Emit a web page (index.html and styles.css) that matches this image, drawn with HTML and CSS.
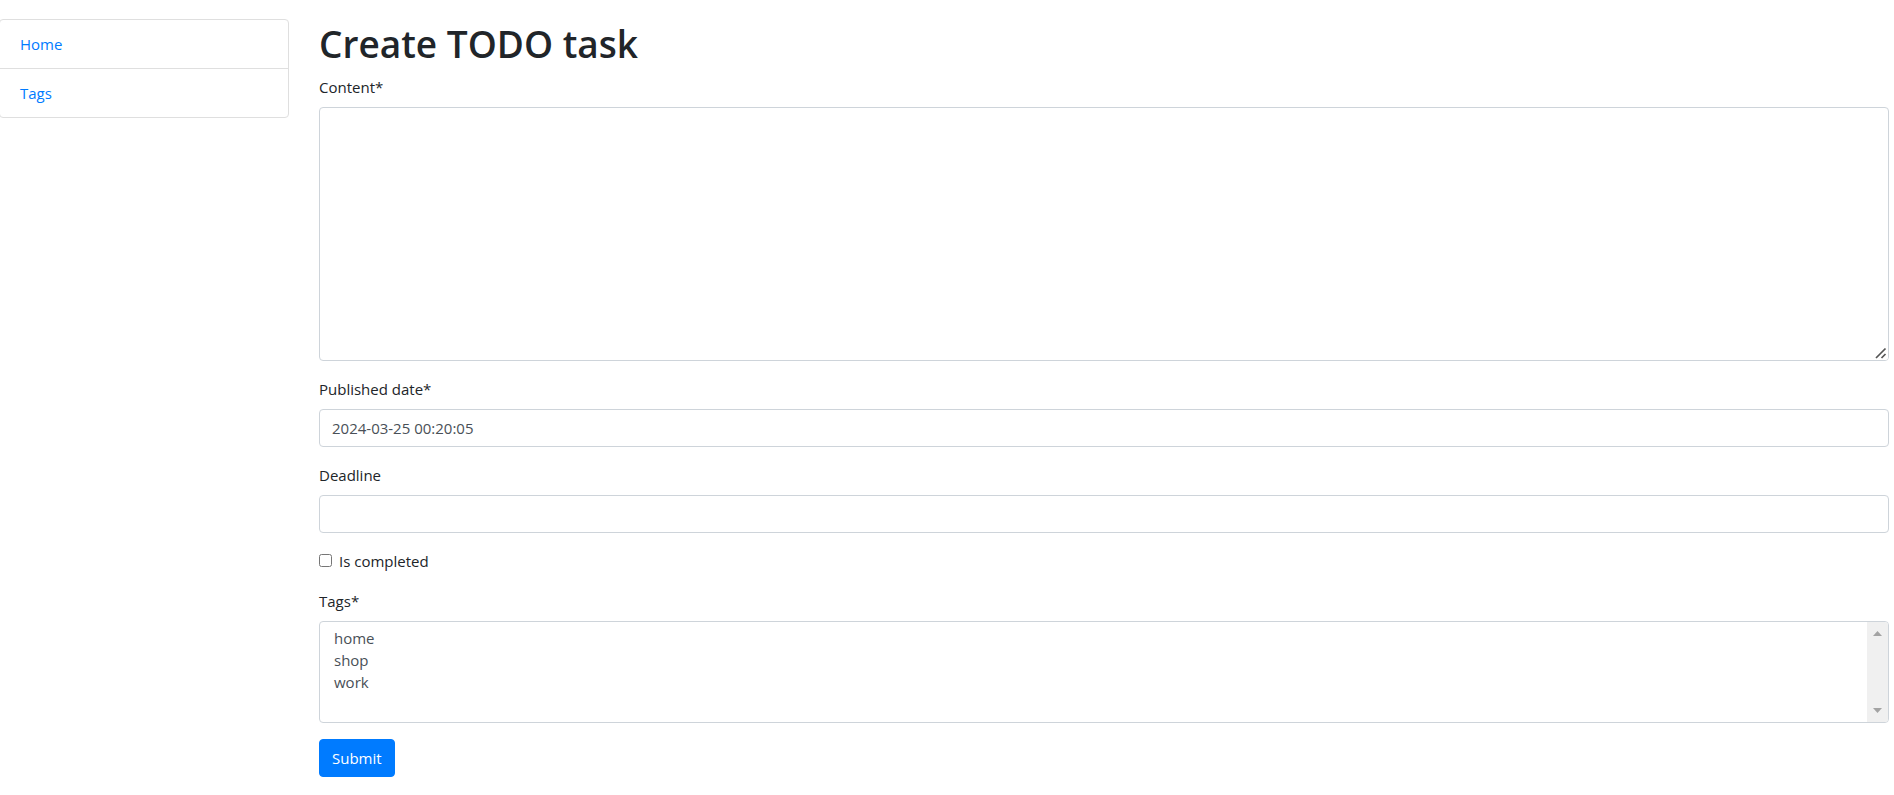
FILE: index.html
```html
<!DOCTYPE html>
<html lang="en">
<head>
<meta charset="utf-8">
<meta name="viewport" content="width=device-width, initial-scale=1">
<title>Create TODO task</title>
<link rel="stylesheet" href="styles.css">
</head>
<body>
<div class="page">
  <div class="row">
    <nav class="sidebar">
      <ul class="menu">
        <li class="menu-item"><a href="#home">Home</a></li>
        <li class="menu-item"><a href="#tags">Tags</a></li>
      </ul>
    </nav>
    <main class="content">
      <h1 class="title">Create TODO task</h1>
      <form>
        <div class="group">
          <label class="label" for="content">Content*</label>
          <div class="field">
            <textarea class="control" id="content" rows="10"></textarea>
            <svg class="grip" viewBox="0 0 16 16" aria-hidden="true"><path d="M4 14L13.500 4.500M9.500 14L13.500 10" fill="none" stroke="#555" stroke-width="1.700"/></svg>
          </div>
        </div>
        <div class="group">
          <label class="label" for="published">Published date*</label>
          <input class="control" id="published" type="text" value="2024-03-25 00:20:05">
        </div>
        <div class="group">
          <label class="label" for="deadline">Deadline</label>
          <input class="control" id="deadline" type="text">
        </div>
        <div class="group check">
          <input class="check-input" id="completed" type="checkbox">
          <label for="completed">Is completed</label>
        </div>
        <div class="group">
          <label class="label" for="tags">Tags*</label>
          <div class="field">
            <select class="control list" id="tags" size="4" multiple>
              <option>home</option>
              <option>shop</option>
              <option>work</option>
            </select>
            <div class="scrollbar" aria-hidden="true">
              <svg class="arrow" viewBox="0 0 9 5"><path d="M0 5L4.500 0L9 5Z"/></svg>
              <svg class="arrow" viewBox="0 0 9 5"><path d="M0 0L4.500 5L9 0Z"/></svg>
            </div>
          </div>
        </div>
        <button class="submit" type="submit">Submit</button>
      </form>
    </main>
  </div>
</div>
</body>
</html>
```
FILE: styles.css
```css
*, *::before, *::after { box-sizing: border-box; }

body {
  margin: 0;
  background: #fff;
  color: #212529;
  font-family: "Segoe UI", "Open Sans", "Noto Sans", sans-serif;
  font-size: 15px;
  line-height: 24px;
}

.page { overflow-x: hidden; padding-top: 19px; }

.row { display: flex; margin: 0 -10px 0 -16px; }

.sidebar { flex: 0 0 16.6667%; padding: 0 15px; }

.content { flex: 1; min-width: 0; padding: 0 15px; }

.menu {
  margin: 0;
  padding: 0;
  list-style: none;
  border: 1px solid #dfdfdf;
  border-radius: 4px;
}

.menu-item { padding: 12px 20px; }
.menu-item + .menu-item { border-top: 1px solid #dfdfdf; }
.menu-item a { color: #007bff; text-decoration: none; }

.title {
  margin: 0 0 8px;
  padding-top: 2px;
  font-size: 37px;
  font-weight: 600;
  line-height: 46px;
}

.group { margin-bottom: 16px; }

.label { display: block; margin-bottom: 8px; }

.field { position: relative; }

.control {
  display: block;
  width: 100%;
  margin: 0;
  padding: 6px 12px;
  border: 1px solid #ced4da;
  border-radius: 4px;
  background: #fff;
  color: #495057;
  font: inherit;
}

textarea.control { resize: vertical; }

.grip {
  position: absolute;
  right: 1px;
  bottom: 1px;
  width: 16px;
  height: 16px;
  border-radius: 0 0 3px 0;
  background: #fff;
  pointer-events: none;
}

.check { display: flex; align-items: center; gap: 7px; }
.check-input { width: 13px; height: 13px; margin: 0 0 2px; }

.list { overflow-y: auto; scrollbar-width: none; }
.list option { min-height: 22px; padding: 0 2px; line-height: 22px; }

.scrollbar {
  position: absolute;
  top: 1px;
  right: 1px;
  bottom: 1px;
  display: flex;
  flex-direction: column;
  align-items: center;
  justify-content: space-between;
  width: 21px;
  padding: 9px 0;
  border-radius: 0 3px 3px 0;
  background: #f0f0f0;
  pointer-events: none;
}

.arrow { width: 9px; height: 5px; fill: #a3a3a3; }

.submit {
  padding: 6px 12px;
  border: 1px solid #007bff;
  border-radius: 4px;
  background: #007bff;
  color: #fff;
  font: inherit;
}
```
